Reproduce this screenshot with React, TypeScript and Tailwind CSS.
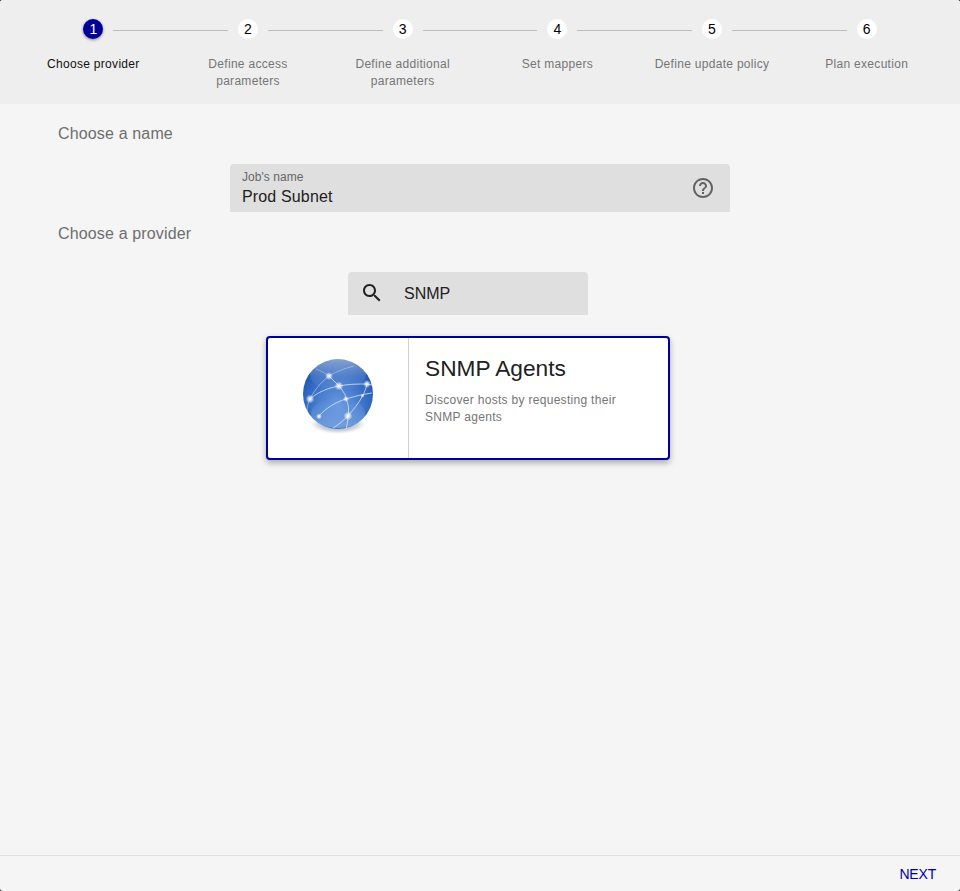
import React from "react";

const steps = [
  ["Choose provider"],
  ["Define access", "parameters"],
  ["Define additional", "parameters"],
  ["Set mappers"],
  ["Define update policy"],
  ["Plan execution"],
];

const sparks: [number, number, number][] = [
  [33, 21, 4],
  [43, 31, 4.5],
  [71, 29, 4],
  [14, 44, 4.5],
  [50, 44, 3],
  [66.5, 40.7, 2],
  [52, 61, 4.5],
  [23, 61.4, 3],
];

function Globe() {
  return (
    <svg width="84" height="90" viewBox="0 0 84 90">
      <defs>
        <radialGradient id="ball" cx="0.5" cy="0.64" r="0.66">
          <stop offset="0" stopColor="#6596dd" />
          <stop offset="0.4" stopColor="#4a7fd0" />
          <stop offset="0.72" stopColor="#2f66bf" />
          <stop offset="0.92" stopColor="#1c52ab" />
          <stop offset="1" stopColor="#18479b" />
        </radialGradient>
        <linearGradient id="gloss" x1="0" y1="0" x2="0" y2="1">
          <stop offset="0" stopColor="#ffffff" stopOpacity="0.48" />
          <stop offset="0.55" stopColor="#ffffff" stopOpacity="0.12" />
          <stop offset="1" stopColor="#ffffff" stopOpacity="0" />
        </linearGradient>
        <linearGradient id="glow" x1="0" y1="0" x2="0" y2="1">
          <stop offset="0" stopColor="#9cc0f0" stopOpacity="0" />
          <stop offset="1" stopColor="#9cc0f0" stopOpacity="0.55" />
        </linearGradient>
        <radialGradient id="shade" cx="0.5" cy="0.5" r="0.5">
          <stop offset="0" stopColor="#4a5f78" stopOpacity="0.85" />
          <stop offset="0.65" stopColor="#7a8a9a" stopOpacity="0.4" />
          <stop offset="1" stopColor="#a0aab0" stopOpacity="0" />
        </radialGradient>
        <radialGradient id="spark" cx="0.5" cy="0.5" r="0.5">
          <stop offset="0" stopColor="#ffffff" />
          <stop offset="0.35" stopColor="#ffffff" stopOpacity="0.75" />
          <stop offset="1" stopColor="#ffffff" stopOpacity="0" />
        </radialGradient>
      </defs>
      <ellipse cx="42" cy="69" rx="28" ry="10" fill="url(#shade)" />
      <circle cx="42" cy="39" r="35" fill="url(#ball)" />
      <ellipse cx="42" cy="58" rx="27" ry="15" fill="url(#glow)" />
      <ellipse cx="42" cy="20" rx="28" ry="16" fill="url(#gloss)" />
      <g fill="none" stroke="#e4eefc" strokeOpacity="0.72" strokeWidth="1">
        <path d="M14 44 C 22 37, 32 33, 43 31 C 52 29, 62 29, 71 29 L 76 30" />
        <path d="M33 21 L 43 31 C 48 37, 50 41, 50 44 C 53 50, 53 56, 52 61 C 52 66, 51 70, 50 74" />
        <path d="M71 29 C 70 34, 68 38, 66.5 41 C 63 48, 57 55, 52 61 C 47 66, 42 70, 37 73" />
        <path d="M23 61 C 30 53, 40 47, 50 44 C 60 41, 68 39, 76 38" />
        <path d="M33 21 C 24 28, 18 36, 14 44 C 12 48, 11 52, 11 56" strokeOpacity="0.45" />
        <path d="M33 21 C 41 16, 50 13, 58 11" strokeOpacity="0.4" />
        <path d="M33 21 C 29 18, 25 16, 20 14" strokeOpacity="0.35" />
      </g>
      <g fill="url(#spark)">
        {sparks.map(([x, y, r]) => (
          <circle key={x} cx={x} cy={y} r={r} />
        ))}
      </g>
    </svg>
  );
}

export default function App() {
  return (
    <div className="h-[891px] w-[960px] overflow-hidden bg-[#333333] font-['Liberation_Sans',Arial,sans-serif]">
      <div className="flex h-full flex-col overflow-hidden rounded-[3px] bg-[#f5f5f5]">
        <div className="flex h-[104px] bg-[#eeeeee] px-4 pt-[19px]">
          {steps.map((lines, i) => (
            <div key={i} className="relative flex-1 text-center">
              {i > 0 && (
                <div className="absolute left-[calc(-50%+20px)] right-[calc(50%+20px)] top-[11px] h-px bg-[#bdbdbd]" />
              )}
              <div
                className={
                  i === 0
                    ? "mx-auto flex h-5 w-5 items-center justify-center rounded-full bg-[#000099] text-[14px] leading-5 text-white shadow-[0_1px_3px_rgba(0,0,0,0.45)]"
                    : "mx-auto flex h-5 w-5 items-center justify-center rounded-full bg-white text-[14px] leading-5 text-black"
                }
              >
                {i + 1}
              </div>
              <div
                className={
                  i === 0
                    ? "mt-[17px] text-[12px] leading-[17px] tracking-[0.3px] text-[#111111]"
                    : "mt-[17px] text-[12px] leading-[17px] tracking-[0.3px] text-[#757575]"
                }
              >
                {lines.map((l) => (
                  <div key={l}>{l}</div>
                ))}
              </div>
            </div>
          ))}
        </div>

        <div className="flex-1 pt-[20px]">
          <div className="pl-[58px] text-[16px] leading-[19px] tracking-[0.15px] text-[#6e6e6e]">Choose a name</div>
          <div className="ml-[230px] mt-[21px] flex h-[48px] w-[500px] items-center justify-between rounded-t-[4px] bg-[#dfdfdf] pl-3 pr-[16px]">
            <div>
              <div className="text-[12px] leading-[14px] tracking-[0.05px] text-[#666666]">Job's name</div>
              <div className="mt-[3px] text-[16px] leading-[19px] tracking-[0.15px] text-[#212121]">Prod Subnet</div>
            </div>
            <svg width="24" height="24" viewBox="0 0 24 24" fill="#616161" className="-mt-[1px] -mr-[1px]">
              <path d="M11 18h2v-2h-2v2zm1-16C6.48 2 2 6.48 2 12s4.48 10 10 10 10-4.48 10-10S17.52 2 12 2zm0 18c-4.41 0-8-3.59-8-8s3.59-8 8-8 8 3.59 8 8-3.59 8-8 8zm0-14c-2.21 0-4 1.79-4 4h2c0-1.1.9-2 2-2s2 .9 2 2c0 2-3 1.75-3 5h2c0-2.25 3-2.5 3-5 0-2.21-1.79-4-4-4z" />
            </svg>
          </div>
          <div className="mt-[12px] pl-[58px] text-[16px] leading-[19px] tracking-[0.15px] text-[#6e6e6e]">Choose a provider</div>
          <div className="ml-[348px] mt-[29px] flex h-[43px] w-[240px] items-center rounded-t-[4px] bg-[#dfdfdf] pl-3">
            <svg width="24" height="24" viewBox="0 0 24 24" fill="#212121" className="-mt-[1px]">
              <path d="M15.5 14h-.79l-.28-.27C15.41 12.59 16 11.11 16 9.5 16 5.91 13.09 3 9.5 3S3 5.91 3 9.5 5.91 16 9.5 16c1.61 0 3.09-.59 4.23-1.57l.27.28v.79l5 4.99L20.49 19l-4.99-5zm-6 0C7.01 14 5 11.99 5 9.5S7.01 5 9.5 5 14 7.01 14 9.5 11.99 14 9.5 14z" />
            </svg>
            <span className="ml-5 text-[16px] leading-[19px] text-[#212121]">SNMP</span>
          </div>
          <div className="ml-[266px] mt-[21px] flex h-[124px] w-[404px] rounded-[4px] border-2 border-[#000099] bg-white shadow-[0_3px_6px_rgba(0,0,0,0.3)]">
            <div className="flex w-[141px] shrink-0 items-center justify-center border-r border-[#d0d0d0] pt-[3px]">
              <Globe />
            </div>
            <div className="pl-4 pt-[17px]">
              <div className="text-[22.7px] leading-[26px] text-[#212121]">SNMP Agents</div>
              <div className="mt-[11px] w-[220px] text-[12px] leading-[17px] tracking-[0.3px] text-[#757575]">
                Discover hosts by requesting their SNMP agents
              </div>
            </div>
          </div>
        </div>

        <div className="flex h-[36px] items-center justify-end border-t border-[#e0e0e0] pr-6">
          <span className="text-[14px] leading-4 tracking-[-0.2px] text-[#0000aa]">NEXT</span>
        </div>
      </div>
    </div>
  );
}
